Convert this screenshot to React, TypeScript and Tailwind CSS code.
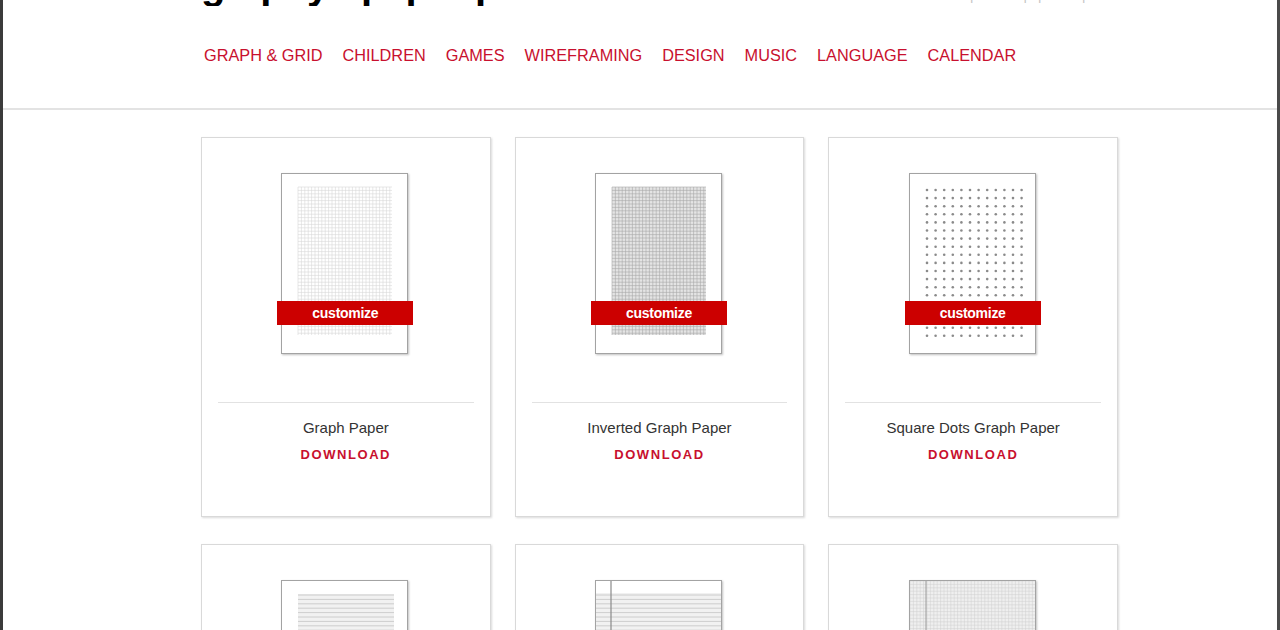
import React from "react";

const navItems = ["GRAPH & GRID", "CHILDREN", "GAMES", "WIREFRAMING", "DESIGN", "MUSIC", "LANGUAGE", "CALENDAR"];

type Kind = "graph" | "inverted" | "dots" | "lined" | "notebook" | "engineering";

const papers: { title: string; kind: Kind }[] = [
    { title: "Graph Paper", kind: "graph" },
    { title: "Inverted Graph Paper", kind: "inverted" },
    { title: "Square Dots Graph Paper", kind: "dots" },
    { title: "Lined Paper", kind: "lined" },
    { title: "Notebook Paper", kind: "notebook" },
    { title: "Engineering Paper", kind: "engineering" },
];

function range(n: number) {
    return Array.from({ length: n }, (_, i) => i);
}

function Pattern({ kind }: { kind: Kind }) {
    // paper is 125x179 inside its border
    if (kind === "graph" || kind === "inverted") {
        const dark = kind === "inverted";
        const step = 3.4;
        const x0 = 16;
        const y0 = 13;
        const w = 94;
        const h = 148;
        return (
            <svg width="125" height="179" className="block">
                {dark && <rect x={x0} y={y0} width={w} height={h} fill="#e4e4e4" />}
                {range(Math.floor(w / step) + 1).map((i) => (
                    <line key={"v" + i} x1={x0 + i * step} y1={y0} x2={x0 + i * step} y2={y0 + h} stroke={dark ? "#a8a8a8" : "#d6d6d6"} strokeWidth="0.6" />
                ))}
                {range(Math.floor(h / step) + 1).map((i) => (
                    <line key={"h" + i} x1={x0} y1={y0 + i * step} x2={x0 + w} y2={y0 + i * step} stroke={dark ? "#a8a8a8" : "#d6d6d6"} strokeWidth="0.6" />
                ))}
            </svg>
        );
    }
    if (kind === "dots") {
        return (
            <svg width="125" height="179" className="block">
                {range(19).map((r) =>
                    range(12).map((c) => (
                        <circle key={r + "-" + c} cx={17 + c * 8.6} cy={16 + r * 8.1} r="1.3" fill="#8a8a8a" />
                    ))
                )}
            </svg>
        );
    }
    if (kind === "lined") {
        return (
            <svg width="125" height="179" className="block">
                <rect x="16" y="13" width="96" height="150" fill="#f1f1f1" />
                {range(34).map((i) => (
                    <line key={i} x1="16" y1={14 + i * 4.4} x2="112" y2={14 + i * 4.4} stroke="#c4c4c4" strokeWidth="0.8" />
                ))}
            </svg>
        );
    }
    if (kind === "notebook") {
        return (
            <svg width="125" height="179" className="block">
                <rect x="0" y="12" width="125" height="167" fill="#f1f1f1" />
                {range(38).map((i) => (
                    <line key={i} x1="0" y1={14 + i * 4.4} x2="125" y2={14 + i * 4.4} stroke="#c4c4c4" strokeWidth="0.8" />
                ))}
                <line x1="15" y1="0" x2="15" y2="179" stroke="#8a8a8a" strokeWidth="1.2" />
            </svg>
        );
    }
    return (
        <svg width="125" height="179" className="block">
            <rect x="0" y="0" width="125" height="179" fill="#efefef" />
            {range(38).map((i) => (
                <line key={"v" + i} x1={i * 3.4} y1="0" x2={i * 3.4} y2="179" stroke="#cfcfcf" strokeWidth="0.5" />
            ))}
            {range(53).map((i) => (
                <line key={"h" + i} x1="0" y1={i * 3.4} x2="125" y2={i * 3.4} stroke="#cfcfcf" strokeWidth="0.5" />
            ))}
            <line x1="16" y1="0" x2="16" y2="179" stroke="#9a9a9a" strokeWidth="1" />
        </svg>
    );
}

function PaperCard({ title, kind }: { title: string; kind: Kind }) {
    const showBanner = kind === "graph" || kind === "inverted" || kind === "dots";
    return (
        <div className="h-[380px] bg-white border border-[#d9d9d9] shadow-[1px_1px_2px_rgba(0,0,0,0.15)] flex flex-col items-center pt-[35px]">
            <div className="relative -ml-[2px] w-[127px] h-[181px] bg-white border border-[#a3a3a3] shadow-[1px_1px_2px_rgba(0,0,0,0.25)]">
                <Pattern kind={kind} />
                {showBanner && (
                    <div className="absolute left-[-5px] top-[127px] w-[136px] h-[24px] bg-[#cc0000] flex items-center justify-center text-white text-[14px] font-bold leading-none tracking-[-0.02em]">
                        customize
                    </div>
                )}
            </div>
            <div className="self-stretch mx-4 mt-[48px] border-t border-[#e2e2e2]" />
            <div className="mt-[15px] text-[15px] leading-5 text-[#333]">{title}</div>
            <div className="mt-[7px] text-[13px] leading-5 font-bold tracking-[0.12em] text-[#c8102e]">DOWNLOAD</div>
        </div>
    );
}

export default function App() {
    return (
        <div className="min-h-screen bg-white border-x-[3px] border-l-[#3b3b3b] border-r-[#4a4a4a] font-['Liberation_Sans',Arial,sans-serif]">
            <header className="h-[110px] border-b-2 border-[#e3e3e3]">
                <div className="ml-[198px] mr-[160px] flex justify-between">
                    <div className="h-[6px] overflow-hidden">
                        <div className="mt-[-36px] text-[40px] font-bold leading-[42px] text-black tracking-tight">graphy · paper press</div>
                    </div>
                    <div className="h-[4px] overflow-hidden">
                        <div className="mt-[-12px] text-[13px] leading-4 text-[#c4c4c4]">free printable paper templates</div>
                    </div>
                </div>
                <nav className="ml-[201px] mt-[39px] flex gap-[20px]">
                    {navItems.map((item) => (
                        <a key={item} href="#" className="text-[16.3px] leading-5 text-[#c8102e]">
                            {item}
                        </a>
                    ))}
                </nav>
            </header>
            <main className="ml-[198px] w-[917px] pt-[27px] grid grid-cols-3 gap-x-[24px] gap-y-[27px]">
                {papers.map((p) => (
                    <PaperCard key={p.title} title={p.title} kind={p.kind} />
                ))}
            </main>
        </div>
    );
}
